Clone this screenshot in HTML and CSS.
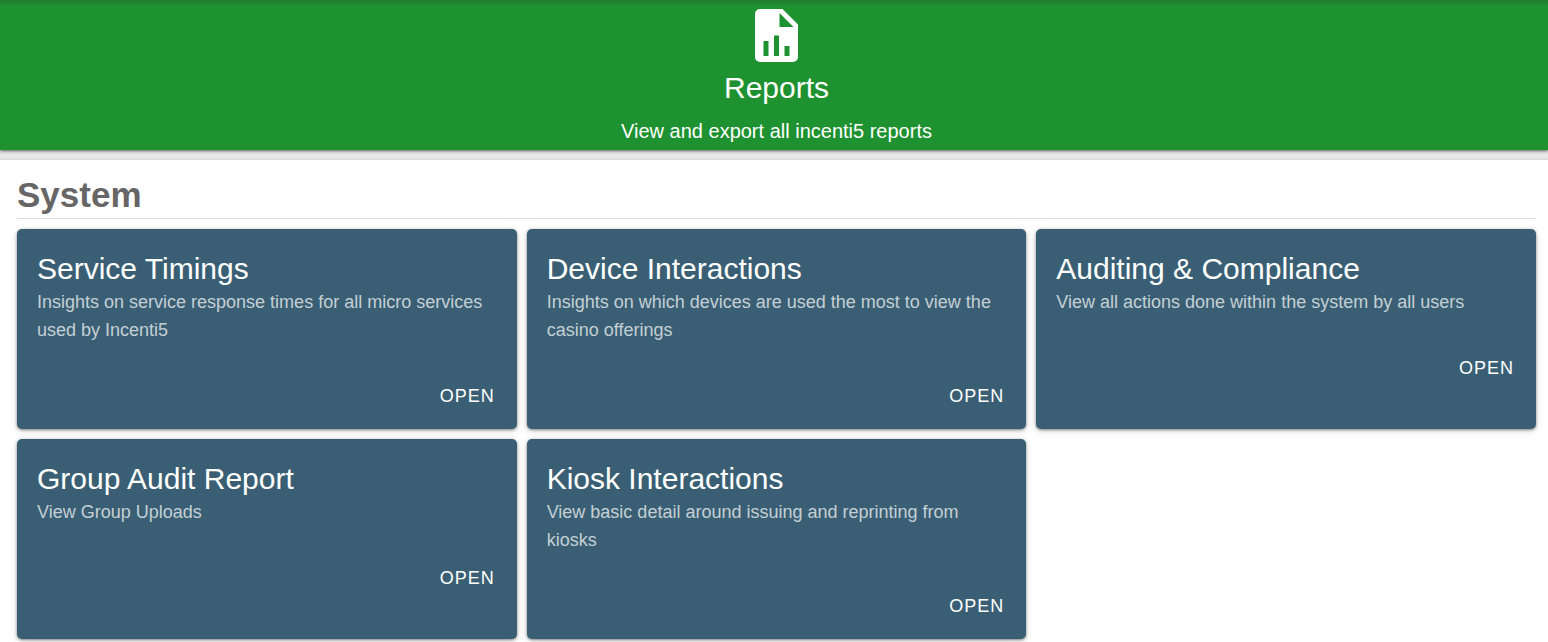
FILE: index.html
```html
<!DOCTYPE html>
<html lang="en">
<head>
<meta charset="utf-8">
<meta name="viewport" content="width=device-width, initial-scale=1">
<title>Reports</title>
<link rel="stylesheet" href="styles.css">
</head>
<body>
<header class="banner">
  <svg class="banner-icon" viewBox="0 0 43 53" aria-hidden="true">
    <path fill="#fff" fill-rule="evenodd" d="M5 0H27.500L43 15.500V48a5 5 0 0 1-5 5H5a5 5 0 0 1-5-5V5a5 5 0 0 1 5-5ZM24.500 4V18H38.500ZM8.500 32V47H13.500V32ZM19 26.500V47H24V26.500ZM29.500 37V47H34.500V37Z"/>
  </svg>
  <h1 class="banner-title">Reports</h1>
  <p class="banner-text">View and export all incenti5 reports</p>
</header>
<main class="content">
  <h2 class="section-title">System</h2>
  <div class="cards">
    <article class="card">
      <h3 class="card-title">Service Timings</h3>
      <p class="card-text">Insights on service response times for all micro services used by Incenti5</p>
      <button class="card-open" type="button">OPEN</button>
    </article>
    <article class="card">
      <h3 class="card-title">Device Interactions</h3>
      <p class="card-text">Insights on which devices are used the most to view the casino offerings</p>
      <button class="card-open" type="button">OPEN</button>
    </article>
    <article class="card">
      <h3 class="card-title">Auditing &amp; Compliance</h3>
      <p class="card-text">View all actions done within the system by all users</p>
      <button class="card-open" type="button">OPEN</button>
    </article>
    <article class="card">
      <h3 class="card-title">Group Audit Report</h3>
      <p class="card-text">View Group Uploads</p>
      <button class="card-open" type="button">OPEN</button>
    </article>
    <article class="card">
      <h3 class="card-title">Kiosk Interactions</h3>
      <p class="card-text">View basic detail around issuing and reprinting from kiosks</p>
      <button class="card-open" type="button">OPEN</button>
    </article>
  </div>
</main>
</body>
</html>
```
FILE: styles.css
```css
* {
  box-sizing: border-box;
}

body {
  margin: 0;
  background: #e8e8e8;
  font-family: "Liberation Sans", Arial, sans-serif;
}

h1, h2, h3, p {
  margin: 0;
  font-weight: 400;
}

.banner {
  display: flex;
  flex-direction: column;
  align-items: center;
  padding: 9px 12px 4px 17px;
  background: linear-gradient(#1d7c2d, #1e9130 6px);
  color: #fff;
  box-shadow: 0 1px 3px rgba(0, 0, 0, 0.6);
}

.banner-icon {
  width: 43px;
  height: 53px;
}

.banner-title {
  margin: 7px 0 9px;
  font-size: 30px;
  line-height: 38px;
}

.banner-text {
  font-size: 20px;
  line-height: 30px;
}

.content {
  margin-top: 10px;
  padding: 12px 12px 3px 17px;
  background: #fff;
  box-shadow: 0 0 3px rgba(0, 0, 0, 0.15);
}

.section-title {
  margin-bottom: 10px;
  border-bottom: 1px solid #dcdcdc;
  color: #666;
  font-size: 35px;
  font-weight: 700;
  line-height: 46px;
}

.cards {
  display: grid;
  grid-template-columns: repeat(3, 1fr);
  grid-auto-rows: 1fr;
  gap: 10px;
}

.card {
  display: flex;
  flex-direction: column;
  padding: 20px 20px 14px;
  border-radius: 5px;
  background: #3a5f74;
  color: #fff;
  box-shadow: 0 1px 3px rgba(0, 0, 0, 0.45), 0 2px 8px rgba(0, 0, 0, 0.12);
}

.card-title {
  font-size: 30px;
  line-height: 39px;
}

.card-text {
  margin-bottom: 34px;
  color: #c4cfd5;
  font-size: 18px;
  line-height: 28px;
}

.card-open {
  align-self: flex-end;
  padding: 0 2px;
  border: 0;
  background: none;
  color: #fff;
  font-family: inherit;
  font-size: 18px;
  line-height: 37px;
  letter-spacing: 1px;
  cursor: pointer;
}
```
